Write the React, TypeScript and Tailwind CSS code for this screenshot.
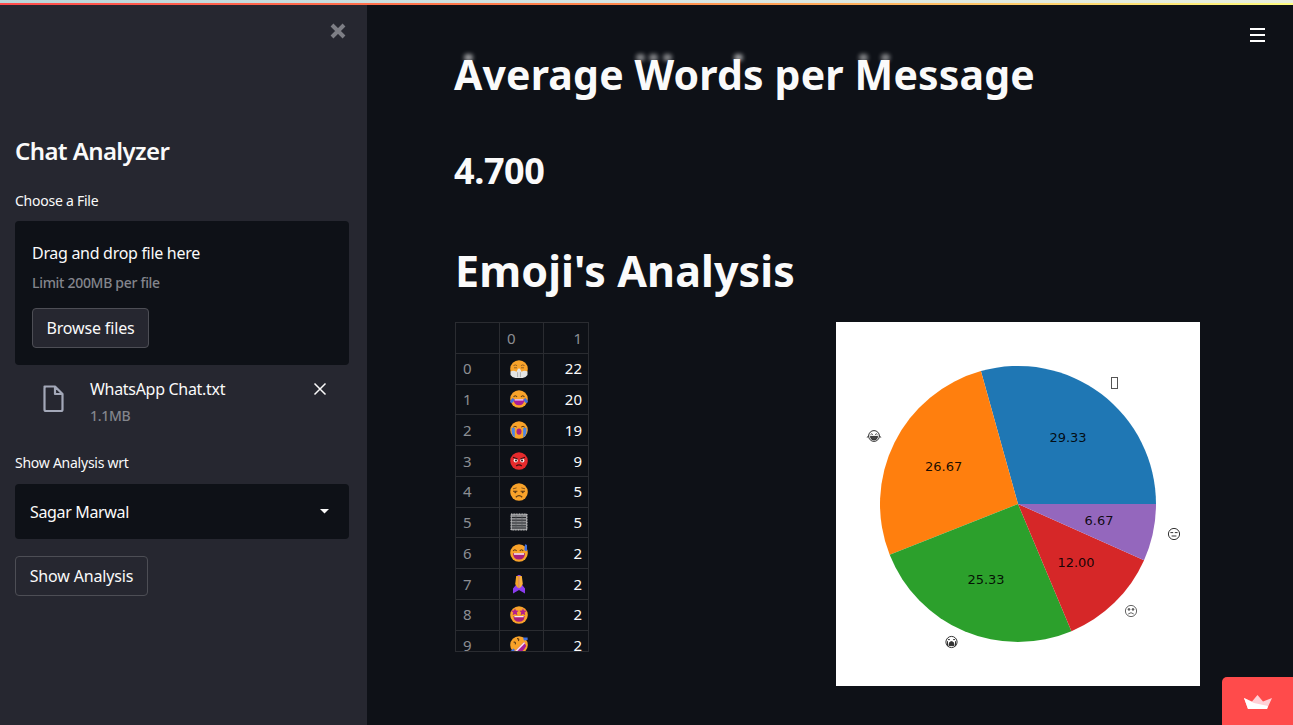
import React from "react";

const font = "font-['Noto_Sans',sans-serif]";

const orange = "#f9a32a";

function Emoji({ children }: { children: React.ReactNode }) {
  return (
    <svg width="18" height="18" viewBox="0 0 18 18" className="ml-[2px] block overflow-visible">
      {children}
    </svg>
  );
}

const emojis = [
  // face with steam / mask
  <Emoji key="0">
    <circle cx="9" cy="9" r="8.8" fill={orange} />
    <path d="M3.5 5.5q2 -1.2 3.6 .2M10.9 5.7q1.6 -1.4 3.6 -.2" stroke="#8a5a20" strokeWidth="0.9" fill="none" />
    <path d="M4 7.8h3M11 7.8h3" stroke="#8a5a20" strokeWidth="0.9" />
    <path d="M.5 11.5q3 -1.5 6 .2q1.2 -3.5 2.5 -3.5t2.5 3.5q3 -1.7 6 -.2v3.5q-2 3 -5 3h-7q-3 0 -5 -3z" fill="#e4e4e4" />
    <path d="M7.6 12.2v5M10.4 12.2v5" stroke="#9a9a9a" strokeWidth="0.7" />
  </Emoji>,
  // tears of joy
  <Emoji key="1">
    <circle cx="9" cy="9" r="8.8" fill={orange} />
    <path d="M3.6 7q1.6 -2.6 3.4 0M11 7q1.8 -2.6 3.4 0" stroke="#5c3a16" strokeWidth="1.1" fill="none" />
    <path d="M3.6 9.2h10.8q-.2 6 -5.4 6t-5.4 -6z" fill="#a91e9a" />
    <path d="M4.6 9.2h8.8v1.2h-8.8z" fill="#f5e4ef" />
    <path d="M3 7.8q-2.8 2.4 -3 4q.6 1.6 2.4 1q1.6 -1 1.8 -3z" fill="#3f6fe0" />
    <path d="M15 7.8q2.8 2.4 3 4q-.6 1.6 -2.4 1q-1.6 -1 -1.8 -3z" fill="#3f6fe0" />
  </Emoji>,
  // loudly crying
  <Emoji key="2">
    <circle cx="9" cy="9" r="8.8" fill={orange} />
    <path d="M3.2 6.2q1.6 -1.8 3.6 -.2M11.2 6q2 -1.6 3.6 .2" stroke="#5c3a16" strokeWidth="1" fill="none" />
    <path d="M1.6 6.8h3.2v9.6l-2.2 -1.6q-1.4 -2.8 -1 -8z" fill="#4a86e8" />
    <path d="M13.2 6.8h3.2q.4 5.2 -1 8l-2.2 1.6z" fill="#4a86e8" />
    <ellipse cx="9" cy="10.6" rx="2.5" ry="3.2" fill="#b01f80" />
  </Emoji>,
  // angry
  <Emoji key="3">
    <circle cx="9" cy="9" r="8.8" fill="#e62a2c" />
    <circle cx="5.7" cy="8.4" r="2.1" fill="#f4e9e9" />
    <circle cx="12.3" cy="8.4" r="2.1" fill="#f4e9e9" />
    <circle cx="6" cy="8.6" r="1" fill="#2a1616" />
    <circle cx="12" cy="8.6" r="1" fill="#2a1616" />
    <path d="M3 5.2l4.6 1.8M15 5.2l-4.6 1.8" stroke="#3a1010" strokeWidth="1.2" />
    <path d="M6.2 14q2.8 -2.4 5.6 0" stroke="#3a1010" strokeWidth="1.2" fill="none" />
  </Emoji>,
  // unamused
  <Emoji key="4">
    <circle cx="9" cy="9" r="8.8" fill={orange} />
    <path d="M3 5.8l3.6 -.9M15 5.8l-3.6 -.9" stroke="#7a4c1a" strokeWidth="0.9" />
    <path d="M3 8.2h4.4M10.6 8.2h4.4" stroke="#5c3a16" strokeWidth="1.1" />
    <circle cx="5.3" cy="9.3" r="1" fill="#5c3a16" />
    <circle cx="12.7" cy="9.3" r="1" fill="#5c3a16" />
    <path d="M5.8 14.2q3.2 -3 6.4 0" stroke="#5c3a16" strokeWidth="1.2" fill="none" />
  </Emoji>,
  // missing glyph box
  <Emoji key="5">
    <rect x="1" y="1" width="16" height="16" fill="#8b8c8f" />
    <rect x="1" y="1" width="16" height="16" fill="none" stroke="#d4d4d4" strokeWidth="1" strokeDasharray="1 0.6" />
    <path d="M2 4.500h14M2 7.200h14M2 10h14M2 12.800h14M2 15h14" stroke="#26282c" strokeWidth="1" />
    <path d="M6 2v14M12 2v14" stroke="#55575b" strokeWidth="0.6" />
  </Emoji>,
  // sweat smile
  <Emoji key="6">
    <circle cx="9" cy="9" r="8.8" fill={orange} />
    <path d="M3.2 7q1.6 -2.6 3.4 0M9.8 7q1.8 -2.6 3.4 0" stroke="#5c3a16" strokeWidth="1.1" fill="none" />
    <path d="M3 9.2h12q-.2 6.4 -6 6.4t-6 -6.4z" fill="#a91e7a" />
    <path d="M4 9.2h10v1.6h-10z" fill="#f5e8ee" />
    <path d="M15 .2q2 .4 2 1v5.2q-1 1.2 -2.2 .2q-.6 -.6 -.4 -1.6z" fill="#3f6fe0" />
  </Emoji>,
  // folded hands
  <Emoji key="7">
    <path d="M7.6 0h3v8l4.4 5.6v5l-6 -3.6l-6 3.6v-5l4.6 -5.6z" fill="#8a3cf0" />
    <path d="M6.2 1h2.6v12.4l-2 -1.6l-1.6 -2.8z" fill="#f5a629" />
    <path d="M9.2 1h2.6l1 8l-1.6 2.8l-2 1.6z" fill="#fbb13c" />
  </Emoji>,
  // star struck
  <Emoji key="8">
    <circle cx="9" cy="9" r="8.8" fill={orange} />
    <path d="M5 2.4l1 2.2l2.6 .2l-1.8 1.8l.6 2.6l-2.4 -1.2l-2.4 1.2l.6 -2.6l-2.2 -1.8l2.8 -.2z" fill="#b5208c" />
    <path d="M13 2.4l1 2.2l2.8 .2l-2.2 1.8l.6 2.6l-2.2 -1.2l-2.4 1.2l.6 -2.6l-1.8 -1.8l2.6 -.2z" fill="#b5208c" />
    <path d="M3.4 10h11.2q-.2 5.8 -5.6 5.8t-5.6 -5.8z" fill="#a91e7a" />
    <path d="M4.4 10h9.2v1.3h-9.2z" fill="#f5e8ee" />
  </Emoji>,
  // rolling on the floor
  <Emoji key="9">
    <circle cx="9" cy="9" r="8.8" fill={orange} />
    <path d="M4.6 15.6l9.6 -9.6l2 4q-3 6.2 -8.4 7.4z" fill="#a91e9a" />
    <path d="M4.6 15.6l9.6 -9.6l.8 1.2l-9.2 9.4z" fill="#f5e4ef" />
    <path d="M13 1.4h4.6v2.6l-3.6 .6z" fill="#3f6fe0" />
    <path d="M.6 15l3 -2.6l1.4 1.6l-2.6 3z" fill="#3f6fe0" />
    <path d="M3.6 6.2q2.6 -.6 1.6 2.2M7 2.6q2.6 -.2 1.4 2.4" stroke="#5c3a16" strokeWidth="1.1" fill="none" />
  </Emoji>,
];

const counts = [22, 20, 19, 9, 5, 5, 2, 2, 2, 2];

function cellClass(last = false) {
  return `h-full flex items-center ${last ? "" : "border-r border-[#2a2c31]"}`;
}

function EmojiTable() {
  return (
    <div className={`w-[134px] h-[330px] overflow-hidden border border-[#2a2c31] text-[15px] ${font}`}>
      <div className="flex h-[30.75px] border-b border-[#2a2c31] text-[#8c8e93]">
        <div className={`w-[44px] ${cellClass()}`} />
        <div className={`w-[44px] pl-[7px] ${cellClass()}`}>0</div>
        <div className={`flex-1 justify-end pr-[6px] ${cellClass(true)}`}>1</div>
      </div>
      {counts.map((count, i) => (
        <div key={i} className="flex h-[30.75px] border-b border-[#2a2c31]">
          <div className={`w-[44px] pl-[7px] text-[#8c8e93] ${cellClass()}`}>{i}</div>
          <div className={`w-[44px] pl-[8px] ${cellClass()}`}>{emojis[i]}</div>
          <div className={`flex-1 justify-end pr-[6px] text-[#fafafa] ${cellClass(true)}`}>{count}</div>
        </div>
      ))}
    </div>
  );
}

const slices = [
  { value: 29.33, color: "#1f77b4" },
  { value: 26.67, color: "#ff7f0e" },
  { value: 25.33, color: "#2ca02c" },
  { value: 12.0, color: "#d62728" },
  { value: 6.67, color: "#9467bd" },
];

const pieLabels = [
  { text: "29.33", x: 232, y: 115 },
  { text: "26.67", x: 107.7, y: 144 },
  { text: "25.33", x: 150, y: 257 },
  { text: "12.00", x: 240, y: 240 },
  { text: "6.67", x: 263, y: 198 },
];

function PieChart() {
  const cx = 182;
  const cy = 182;
  const r = 138;
  let start = 0;
  return (
    <svg width="364" height="364" viewBox="0 0 364 364" className="block bg-white">
      {slices.map((s) => {
        const end = start + (s.value / 100) * Math.PI * 2;
        const x1 = cx + r * Math.cos(start);
        const y1 = cy - r * Math.sin(start);
        const x2 = cx + r * Math.cos(end);
        const y2 = cy - r * Math.sin(end);
        const large = end - start > Math.PI ? 1 : 0;
        start = end;
        return (
          <path
            key={s.color}
            d={`M${cx} ${cy}L${x1} ${y1}A${r} ${r} 0 ${large} 0 ${x2} ${y2}Z`}
            fill={s.color}
          />
        );
      })}
      {pieLabels.map((l) => (
        <text
          key={l.text}
          x={l.x}
          y={l.y + 4.5}
          textAnchor="middle"
          fontFamily="DejaVu Sans"
          fontSize="13"
          fill="#000"
          fillOpacity="0.9"
        >
          {l.text}
        </text>
      ))}
      {/* missing glyph label */}
      <rect x="275.5" y="55.5" width="6" height="11" fill="none" stroke="#555" strokeWidth="1" />
      {/* tears of joy */}
      <g transform="translate(38 114)" fill="none" stroke="#333" strokeWidth="1">
        <circle r="5.4" />
        <path d="M-3.4 -1.4q1.2 -1.6 2.2 0M1.2 -1.4q1.2 -1.6 2.2 0" />
        <path d="M-3.6 .4h7.2q-.4 3.6 -3.6 3.6t-3.6 -3.6z" fill="#444" />
        <path d="M-5.4 -.4l-1.4 2M5.4 -.4l1.4 2" />
      </g>
      {/* crying */}
      <g transform="translate(115.5 320)" fill="none" stroke="#333" strokeWidth="1">
        <circle r="5.6" />
        <path d="M-3.6 -2.4h2M1.6 -2.4h2" />
        <path d="M-2.6 3.6q0 -4 2.6 -4t2.6 4z" fill="#333" />
        <path d="M-4 -.8v5M4 -.8v5" />
      </g>
      {/* frowning */}
      <g transform="translate(295 289)" fill="none" stroke="#555" strokeWidth="0.9">
        <circle r="5.6" />
        <circle cx="-2" cy="-1.6" r="0.9" fill="#555" />
        <circle cx="2" cy="-1.6" r="0.9" fill="#555" />
        <path d="M-2.8 3q2.8 -2.6 5.6 0" />
      </g>
      {/* expressionless */}
      <g transform="translate(338 212)" fill="none" stroke="#333" strokeWidth="1">
        <circle r="5.6" />
        <path d="M-3.6 -1.4h2.8M.8 -1.4h2.8M-2.4 2h4.8" />
      </g>
    </svg>
  );
}

function Sidebar() {
  return (
    <aside className={`w-[367px] shrink-0 h-full bg-[#262730] pl-[15px] pr-[18px] ${font}`}>
      <div className="flex justify-end pr-[3px] pt-[18px]">
        <svg width="16" height="16" viewBox="0 0 16 16">
          <path d="M2 2l12 12M14 2l-12 12" stroke="#7d7e85" strokeWidth="4" />
        </svg>
      </div>
      <h2 className="mt-[94px] h-[36px] flex items-center text-[24px] font-semibold text-[#fafafa] tracking-[-0.6px]">
        Chat Analyzer
      </h2>
      <div className="mt-[21px] h-[20px] flex items-center text-[14px] text-[#fafafa] tracking-[-0.25px]">
        Choose a File
      </div>
      <div className="mt-[11px] h-[144px] rounded-[4px] bg-[#0e1117] pl-[17px] pt-[20px]">
        <div className="h-[24px] flex items-center text-[16px] text-[#fafafa] tracking-[-0.3px]">
          Drag and drop file here
        </div>
        <div className="mt-[7px] h-[20px] flex items-center text-[14px] font-medium text-[#83858c] tracking-[-0.3px]">
          Limit 200MB per file
        </div>
        <button className="mt-[16px] h-[40px] w-[117px] rounded-[4px] border border-[#4d4e55] bg-[#262730] text-[16px] text-[#fafafa] tracking-[-0.15px]">
          Browse files
        </button>
      </div>
      <div className="flex h-[61px] pt-[12px]">
        <svg width="22" height="28" viewBox="0 0 22 28" className="ml-[27px] mt-[8px]" fill="none">
          <path
            d="M2.500 1.500h10.500l7.500 7.500v15.500a1.500 1.500 0 0 1 -1.500 1.500h-15a1.500 1.500 0 0 1 -1.500 -1.500v-21.500a1.500 1.500 0 0 1 1.500 -1.500zM13 1.500v7.500h7.500"
            stroke="#a3a8b8"
            strokeWidth="2.200"
            strokeLinejoin="round"
          />
        </svg>
        <div className="ml-[26px] flex-1">
          <div className="h-[24px] flex items-center text-[16px] text-[#fafafa] tracking-[-0.3px]">
            WhatsApp Chat.txt
          </div>
          <div className="mt-[2px] h-[24px] flex items-center text-[14px] font-medium text-[#83858c] tracking-[-0.3px]">
            1.1MB
          </div>
        </div>
        <svg width="14" height="14" viewBox="0 0 14 14" className="mr-[22px] mt-[5px]">
          <path d="M1.500 1.500l11 11M12.500 1.500l-11 11" stroke="#fafafa" strokeWidth="1.500" />
        </svg>
      </div>
      <div className="mt-[26px] h-[20px] flex items-center text-[14px] text-[#fafafa] tracking-[-0.25px]">
        Show Analysis wrt
      </div>
      <div className="mt-[12px] h-[55px] rounded-[4px] bg-[#0e1117] pl-[15px] pr-[20px] flex items-center justify-between">
        <span className="text-[16px] text-[#fafafa] tracking-[-0.35px]">Sagar Marwal</span>
        <svg width="9" height="5" viewBox="0 0 9 5">
          <path d="M0 0h9l-4.500 4.500z" fill="#fafafa" />
        </svg>
      </div>
      <button className="mt-[17px] block h-[40px] w-[133px] rounded-[4px] border border-[#4d4e55] bg-[#262730] text-[16px] text-[#fafafa] tracking-[-0.15px]">
        Show Analysis
      </button>
    </aside>
  );
}

export default function App() {
  return (
    <div className="h-[725px] w-full overflow-hidden flex flex-col bg-[#0e1117]">
      <div className="h-[3px] bg-[linear-gradient(90deg,#b9d6d8,#d6e6e4_50%,#e8eedd)]" />
      <div className="h-[2px] bg-[linear-gradient(90deg,#ff4b4b,#ff8a4a_50%,#fffd80)]" />
      <div className="flex flex-1 min-h-0">
        <Sidebar />
        <main className={`relative flex-1 pl-[87px] pt-[45px] ${font}`}>
          {/* menu */}
          <div className="absolute right-[28px] top-[23px] flex w-[15px] flex-col gap-[4px]">
            <div className="h-[2px] bg-white" />
            <div className="h-[2px] bg-white" />
            <div className="h-[2px] bg-white" />
          </div>

          {/* ghosting above the first heading */}
          <div className="absolute left-[97px] top-[49px] h-[7px] w-[9px] rounded-full bg-white/60 blur-[2px]" />
          <div className="absolute left-[269px] top-[49px] h-[7px] w-[9px] rounded-full bg-white/50 blur-[2px]" />
          <div className="absolute left-[282px] top-[49px] h-[7px] w-[9px] rounded-full bg-white/50 blur-[2px]" />
          <div className="absolute left-[296px] top-[49px] h-[7px] w-[9px] rounded-full bg-white/50 blur-[2px]" />
          <div className="absolute left-[367px] top-[49px] h-[7px] w-[9px] rounded-full bg-white/60 blur-[2px]" />
          <div className="absolute left-[492px] top-[49px] h-[7px] w-[9px] rounded-full bg-white/50 blur-[2px]" />
          <div className="absolute left-[514px] top-[49px] h-[7px] w-[9px] rounded-full bg-white/50 blur-[2px]" />

          <h1 className="h-[50px] flex items-center whitespace-nowrap text-[41px] font-bold text-[#fafafa] tracking-[0.15px]">
            Average Words per Message
          </h1>
          <div className="mt-[46px] h-[50px] flex items-center text-[36px] font-bold text-[#fafafa] tracking-[-0.4px]">
            4.700
          </div>
          <h1 className="ml-[1px] mt-[50px] h-[50px] flex items-center whitespace-nowrap text-[43px] font-bold text-[#fafafa] tracking-[0.1px]">
            Emoji's Analysis
          </h1>
          <div className="mt-[26px] ml-[1px] flex items-start gap-[247px]">
            <EmojiTable />
            <PieChart />
          </div>

          {/* hosted-with badge */}
          <div className="absolute bottom-0 right-0 flex h-[48px] w-[71px] items-center justify-center rounded-tl-[5px] bg-[#ff4b4b]">
            <svg width="28" height="15" viewBox="0 0 28 15" className="ml-[1px] mt-[3px]">
              <path d="M0 3l8 3.500l5.500 -6.500l5.500 6.500l9 -3.500l-5 11h-19z" fill="#ffd0d6" />
              <path d="M0 3l10 5l14 3l-1 3h-19z" fill="#ffffff" />
            </svg>
          </div>
        </main>
      </div>
    </div>
  );
}
